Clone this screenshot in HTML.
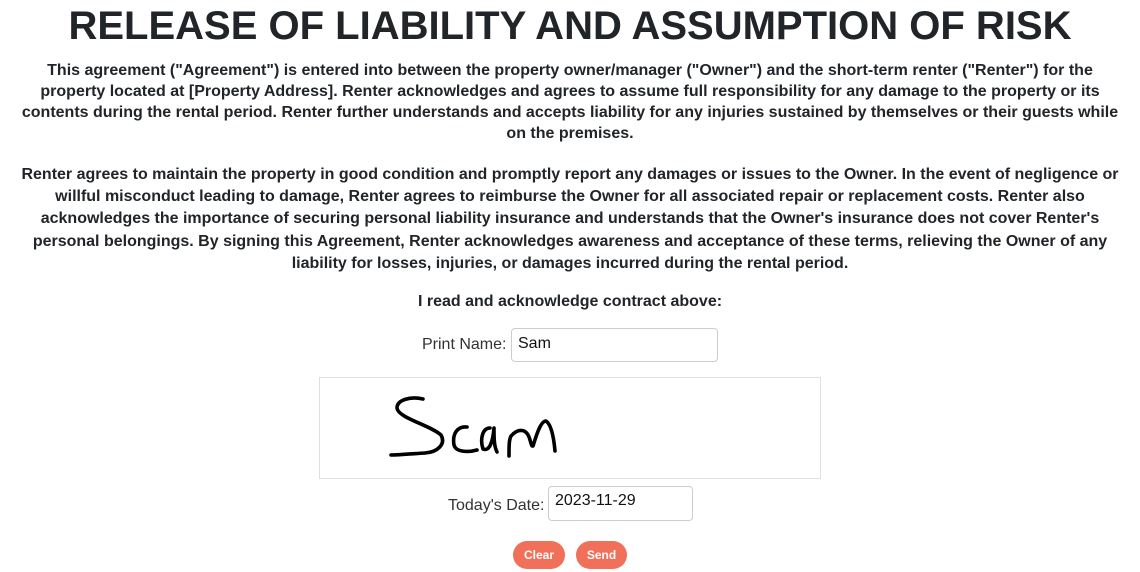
<!DOCTYPE html>
<html><head><meta charset="utf-8"><style>
body{margin:0;background:#fff;color:#212529;font-family:"Liberation Sans",Arial,sans-serif;width:1140px;height:572px;overflow:hidden}
h1{margin:0;position:absolute;top:3px;left:0;width:1140px;text-align:center;font-size:40px;line-height:46px;font-weight:bold;color:#212529}
.p{position:absolute;left:0;width:1140px;text-align:center;font-size:16px;font-weight:bold;line-height:21px;white-space:nowrap;font-family:"Liberation Sans",Arial,sans-serif}
.lbl{position:absolute;font-size:16px;color:#333}
.inp{position:absolute;border:1px solid #ccc;border-radius:4px;box-sizing:border-box;font-size:16px;padding:6px 6px;color:#111}
.btn{position:absolute;top:541px;height:28px;border-radius:14px;background:#f0705a;color:#fff;font-size:12px;font-weight:bold;text-align:center;line-height:28px}
</style></head><body>
<h1>RELEASE OF LIABILITY AND ASSUMPTION OF RISK</h1>
<div class="p" style="top:60px">This agreement ("Agreement") is entered into between the property owner/manager ("Owner") and the short-term renter ("Renter") for the<br>property located at [Property Address]. Renter acknowledges and agrees to assume full responsibility for any damage to the property or its<br>contents during the rental period. Renter further understands and accepts liability for any injuries sustained by themselves or their guests while<br>on the premises.</div>
<div class="p" style="top:164px;line-height:22.2px">Renter agrees to maintain the property in good condition and promptly report any damages or issues to the Owner. In the event of negligence or<br>willful misconduct leading to damage, Renter agrees to reimburse the Owner for all associated repair or replacement costs. Renter also<br>acknowledges the importance of securing personal liability insurance and understands that the Owner's insurance does not cover Renter's<br>personal belongings. By signing this Agreement, Renter acknowledges awareness and acceptance of these terms, relieving the Owner of any<br>liability for losses, injuries, or damages incurred during the rental period.</div>
<div class="p" style="top:291px">I read and acknowledge contract above:</div>
<div class="lbl" style="left:422px;top:336px">Print Name:</div>
<div class="inp" style="left:511px;top:328px;width:207px;height:34px">Sam</div>
<div style="position:absolute;left:319px;top:377px;width:502px;height:102px;border:1px solid #dde0e6;box-sizing:border-box"></div>
<svg style="position:absolute;left:0;top:0" width="1140" height="572"><path d="M423 399 C410 396 397 400 397 408 C398 418 430 425 441 435 C446 444 438 452 425 453 C410 454 398 455 391 455 M467 427 C458 426 452 433 454 445 C456 453 470 452 477 450 M490 428 C482 428 480 440 483 449 C490 452 493 440 494 428 C494 438 494 446 497 452 M509 456 C509 446 509 440 511 436 C518 428 527 428 530 440 C532 447 532 446 533 446 C537 433 541 421 546 421 C552 425 554 440 555 451" fill="none" stroke="#000" stroke-width="3.6" stroke-linecap="round" stroke-linejoin="round"/></svg>
<div class="lbl" style="left:448px;top:497px">Today's Date:</div>
<div class="inp" style="left:548px;top:486px;width:145px;height:35px;padding-top:5px">2023-11-29</div>
<div class="btn" style="left:513px;width:52px">Clear</div>
<div class="btn" style="left:576px;width:51px">Send</div>
</body></html>
